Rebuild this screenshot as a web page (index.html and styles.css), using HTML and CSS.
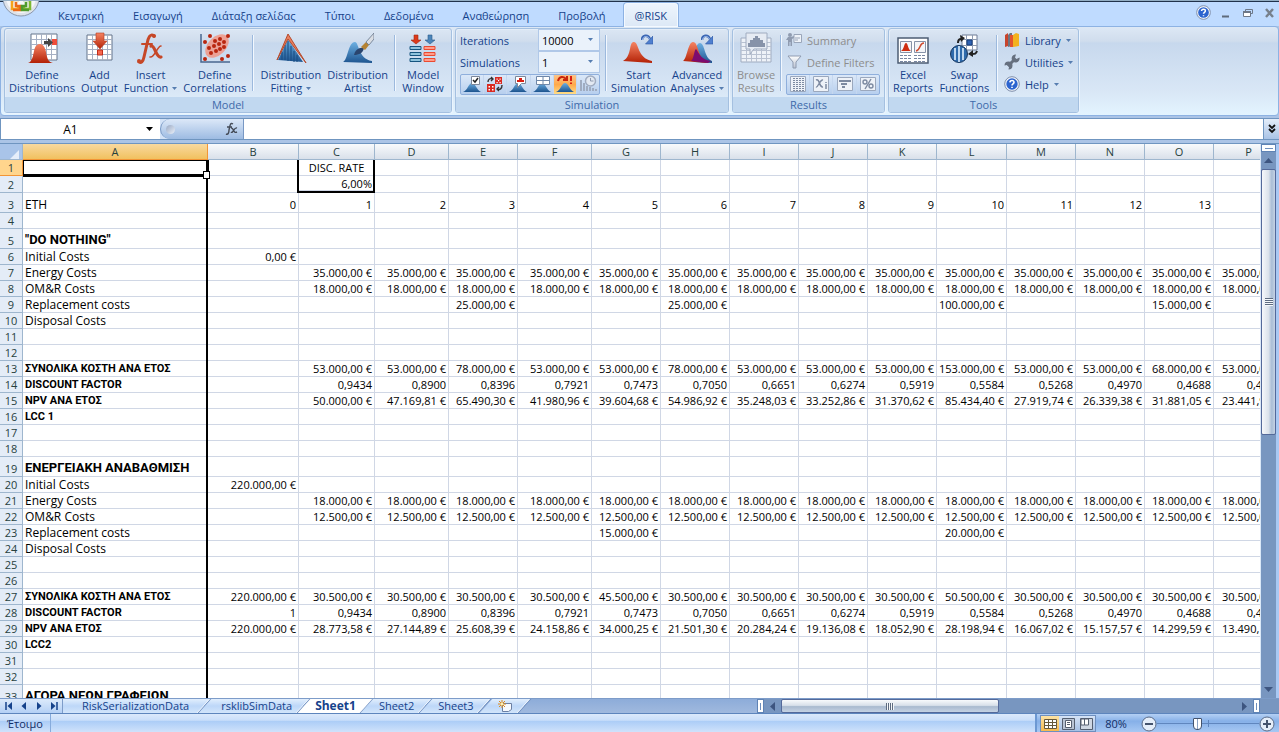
FILE: index.html
```html
<!DOCTYPE html>
<html lang="el">
<head>
<meta charset="utf-8">
<title>@RISK</title>
<link rel="stylesheet" href="styles.css">
</head>
<body>
<svg class="defs" aria-hidden="true">
  <defs>
    <linearGradient id="red" x1="0" y1="0" x2="0" y2="1"><stop offset="0" stop-color="#f58463"/><stop offset="1" stop-color="#b32106"/></linearGradient>
    <linearGradient id="blue" x1="0" y1="0" x2="0" y2="1"><stop offset="0" stop-color="#6db0e2"/><stop offset="1" stop-color="#1e5590"/></linearGradient>
    <linearGradient id="silver" x1="0" y1="0" x2="0" y2="1"><stop offset="0" stop-color="#ffffff"/><stop offset="1" stop-color="#b9c2d2"/></linearGradient>
    <symbol id="hill" viewBox="0 0 16 16"><path d="M0 15C4 14 5 7 8 7S12 13 16 15Z" fill="url(#blue)"/></symbol>
    <symbol id="help" viewBox="0 0 16 16"><circle cx="8" cy="8" r="7.3" fill="#f4f7fb" stroke="#7c8ca8"/><circle cx="8" cy="8" r="5.7" fill="#2c64cf"/><path d="M5.9 6.4C6 3.8 10.3 3.9 10 6.4C9.9 7.8 8 7.8 8 9.4M8 10.8V12" fill="none" stroke="#fff" stroke-width="1.6"/></symbol>
    <symbol id="down" viewBox="0 0 5 3"><path d="M0 0H5L2.5 3Z" fill="currentColor"/></symbol>
    <symbol id="again" viewBox="0 0 12 11"><path d="M1 6C1 1 7 0 9 5" fill="none" stroke="#3c67b5" stroke-width="2.4"/><path d="M1.500 6C2 2 6.500 1 8.500 5" fill="none" stroke="#b9d2f5" stroke-width=".8"/><path d="M12 2V10H4.500Z" fill="#4f7fd0" stroke="#2c559f" stroke-width=".6"/></symbol>
  </defs>
</svg>

<header class="tabbar">
  <button class="orb" aria-label="Office">
    <svg viewBox="0 0 36 16"><ellipse cx="18" cy="-3" rx="18" ry="18" fill="#dfe3ea" stroke="#8a97ab"/><ellipse cx="18" cy="-4" rx="15" ry="16" fill="#f5f6f8"/><g fill="none" stroke-width="2.6"><path d="M16 -1H9V8H15V4" stroke="#f5a31b"/><path d="M20 -1H27V8H21V4" stroke="#7db832"/><path d="M13 1V5H17V9H10" stroke="#ea6a1a"/><path d="M23 1V5H19V9H26" stroke="#4f9a2c"/></g></svg>
  </button>
  <nav class="tabs">
    <button>Κεντρική</button><button>Εισαγωγή</button><button>Διάταξη σελίδας</button><button>Τύποι</button><button>Δεδομένα</button><button>Αναθεώρηση</button><button>Προβολή</button><button class="on">@RISK</button>
  </nav>
  <div class="winctl">
    <button aria-label="Help"><svg width="15" height="15"><use href="#help"/></svg></button>
    <button aria-label="Minimize"><svg width="10" height="10"><path d="M1 8.500H8" stroke="#5f6b7b" stroke-width="2"/></svg></button>
    <button aria-label="Restore"><svg width="10" height="10"><path d="M2.500 3V1.500H9.500V5.500H8" fill="none" stroke="#6d7889"/><path d="M.5 3.500H7.500V8.500H.5Z" fill="#fff" stroke="#6d7889"/><path d="M0 4H8" stroke="#6d7889" stroke-width="2"/></svg></button>
    <button aria-label="Close"><svg width="10" height="10"><path d="M1 1L8 9M8 1L1 9" stroke="#77808c" stroke-width="2.400"/></svg></button>
  </div>
</header>

<section class="ribbon">
  <div class="group">
    <div class="items model">
      <button class="big"><svg viewBox="0 0 32 32"><path d="M5 2H31V28H5Z" fill="#fff" stroke="#64748b"/><path d="M5 7.500H31M5 12.500H31M5 17.500H31M5 22.500H31M10.500 2V28M15.500 2V28M20.500 2V28M25.500 2V28" stroke="#a5b0c4"/><path d="M26 7h5v6h-5Z" fill="#ee4d3b"/><path d="M18 9h4V6l5 4.500L22 15v-3h-4Z" fill="#444"/><path d="M2 31C6 30 7 24 8 19C9 14 11 12 14 12S19 15 20 20C21 26 22 30 27 31Z" fill="url(#red)"/></svg><span>Define<br>Distributions</span></button>
      <button class="big"><svg viewBox="0 0 32 32"><path d="M4 3H29V28H4Z" fill="#fff" stroke="#64748b"/><path d="M4 7.500H29M4 12.500H29M4 17.500H29M4 22.500H29M9.500 3V28M14.500 3V28M19.500 3V28M24.500 3V28" stroke="#a5b0c4"/><path d="M14.500 18h5v5h-5Z" fill="#f7674f" stroke="#c22e18"/><path d="M13 1h8v8h3L17 17L10 9h3Z" fill="url(#red)" stroke="#b53a20" stroke-width=".6"/></svg><span>Add<br>Output</span></button>
      <button class="big"><svg viewBox="0 0 32 32"><g fill="none" stroke="#c64727" stroke-linecap="round"><path d="M19 4C15 1 13 6 12 12L9 25C8 30 6 31 4 30" stroke-width="3"/><path d="M7 12H17" stroke-width="2"/><path d="M16 14C20 13 21 26 26 25" stroke-width="3.200"/><path d="M26 14C22 14 20 26 15 25" stroke-width="1.600"/></g><circle cx="19" cy="4" r="2" fill="#c64727"/><circle cx="4" cy="29" r="2" fill="#c64727"/></svg><span>Insert<br>Function <svg class="caret"><use href="#down"/></svg></span></button>
      <button class="big"><svg viewBox="0 0 32 32"><path d="M2 2V30H31" fill="none" stroke="#49678f" stroke-width="1.500"/><ellipse cx="18" cy="14" rx="14" ry="9" fill="#f68d78" opacity=".75" transform="rotate(-45 18 14)"/><g fill="#b9260f"><circle cx="11" cy="4" r="2"/><circle cx="29" cy="4" r="2"/><circle cx="6" cy="10" r="2"/><circle cx="16" cy="9" r="2"/><circle cx="21" cy="7" r="2"/><circle cx="25" cy="10" r="2"/><circle cx="10" cy="16" r="2"/><circle cx="15" cy="14" r="2"/><circle cx="20" cy="12" r="2"/><circle cx="25" cy="15" r="2"/><circle cx="12" cy="21" r="2"/><circle cx="17" cy="19" r="2"/><circle cx="21" cy="17" r="2"/><circle cx="6" cy="27" r="2"/><circle cx="23" cy="27" r="2"/><circle cx="29" cy="24" r="2"/></g></svg><span>Define<br>Correlations</span></button>
      <i class="sep"></i>
      <button class="big"><svg viewBox="0 0 32 32"><path d="M3 28L13 7L28 30Z" fill="url(#blue)"/><path d="M7 20V28M10 13V28M13 9V29M16 14V29M19 19V30M22 23V30" stroke="#174a80"/><path d="M2 28L13 2L31 31L13 7Z" fill="#e8805f" stroke="#b64a2c"/></svg><span>Distribution<br>Fitting <svg class="caret"><use href="#down"/></svg></span></button>
      <button class="big"><svg viewBox="0 0 32 32"><path d="M1 30C6 28 6 10 13 10C17 10 16 27 30 29V31Z" fill="url(#blue)"/><path d="M12 23C13 18 17 15 22 16C21 21 17 23 12 23Z" fill="#2a456e"/><path d="M19 15L24 10L27 13L23 18Z" fill="#b58334"/><path d="M24 10L32 1V7L27 13Z" fill="#d9dde3" stroke="#65758a" stroke-width=".8"/></svg><span>Distribution<br>Artist</span></button>
      <i class="sep"></i>
      <button class="big"><svg viewBox="0 0 32 32"><path d="M7 3h4v5h3L9 12L4 8h3Z" fill="#db3a1c" stroke="#a4290f" stroke-width=".6"/><path d="M21 3h4v5h3L23 12L18 8h3Z" fill="#4b85ba" stroke="#2e5c8c" stroke-width=".6"/><g fill="#8fc3dd" stroke="#16547f"><path d="M3 14.500h11v3H3ZM3 20.500h11v3H3ZM3 26.500h11v3H3Z"/></g><g fill="#ff9c8b" stroke="#ea4a31"><path d="M17 14.500h11v3H17ZM17 20.500h11v3H17ZM17 26.500h11v3H17Z"/></g></svg><span>Model<br>Window</span></button>
    </div>
    <h2>Model</h2>
  </div>

  <div class="group">
    <div class="items">
      <div class="settings">
        <label for="iter">Iterations</label><span class="combo"><select id="iter"><option>10000</option></select><svg class="caret"><use href="#down"/></svg></span>
        <label for="sims">Simulations</label><span class="combo"><select id="sims"><option>1</option></select><svg class="caret"><use href="#down"/></svg></span>
        <div class="strip">
          <button aria-label="Settings"><svg viewBox="0 0 18 18"><use href="#hill" width="18" height="18"/><path d="M8.500 1.500h8v8h-8Z" fill="#fff" stroke="#7c8799"/><path d="M10 5l2 2l3-4" fill="none" stroke="#222" stroke-width="1.500"/></svg></button>
          <button aria-label="Random values"><svg viewBox="0 0 18 18"><path d="M9 2h7v7H9ZM1 9h8v8H1Z" fill="#d92a22"/><g fill="#fff"><path d="M10.500 3.500h1.200v1.200h-1.200ZM13.500 3.500h1.200v1.200h-1.200ZM12 5h1.200v1.200H12ZM10.500 7h1.200v1.200h-1.200ZM13.500 7h1.200v1.200h-1.200ZM2.500 11h1.500v1.500H2.500ZM6 11h1.500v1.500H6ZM2.500 14h1.500v1.500H2.500ZM6 14h1.500v1.500H6Z"/></g><path d="M2 7C2 4 4 3 7 4M5 2l2 2l-2 2M16 10C16 14 14 15 11 14M13 12l-2 2l2 2" fill="none" stroke="#333" stroke-width="1.400"/></svg></button>
          <button aria-label="Show graph"><svg viewBox="0 0 18 18"><use href="#hill" width="18" height="18"/><path d="M6.500 1.500h10v7h-4l-4 4v-4h-2Z" fill="#fff" stroke="#7c8799"/><path d="M8 7V5h2V3h3v2h2v2Z" fill="#d81e12"/></svg></button>
          <button aria-label="Show window"><svg viewBox="0 0 18 18"><use href="#hill" width="18" height="18"/><path d="M3.500 1.500h13v8h-13ZM3.500 5.500h13M10 1.500v8" fill="#fff" stroke="#6f87a8"/></svg></button>
          <button class="lit" aria-label="Demo mode"><svg viewBox="0 0 18 18"><use href="#hill" width="18" height="18"/><path d="M2 6C3 1 8 1 10 4M11 1v4H7" fill="none" stroke="#c9260b" stroke-width="2"/><path d="M15 1V6M15 7.500V9" stroke="#d81e12" stroke-width="2"/></svg></button>
          <button disabled aria-label="Live update"><svg viewBox="0 0 18 18"><path d="M2 16V5M5 16V8M8 16V11M11 16V12M14 16V13M17 16V14" stroke="#a0acc0" stroke-width="2"/><circle cx="11.500" cy="6" r="5" fill="#e3e9f2" stroke="#a0acc0" stroke-width="1.500"/><path d="M11.500 3v3h3" fill="none" stroke="#8f9bb0"/></svg></button>
        </div>
      </div>
      <i class="sep"></i>
      <button class="big"><svg viewBox="0 0 32 32"><path d="M1 29C5 27 7 22 8 17C9 11 10 10 12 10C17 10 15 26 30 29V31Z" fill="url(#red)"/><use href="#again" x="19" y="2" width="12" height="11"/></svg><span>Start<br>Simulation</span></button>
      <button class="big"><svg viewBox="0 0 32 32"><path d="M12 28C15 24 14 11 19 11C24 11 23 26 31 29V31L13 30Z" fill="url(#blue)"/><path d="M2 29C6 27 7 10 12 10C18 10 16 27 27 31Z" fill="url(#red)"/><path d="M10 29C13 27 13 18 15 17C18 21 20 28 30 29L27 31Z" fill="#7d0b6f"/><use href="#again" x="20" y="2" width="12" height="11"/></svg><span>Advanced<br>Analyses <svg class="caret"><use href="#down"/></svg></span></button>
    </div>
    <h2>Simulation</h2>
  </div>

  <div class="group">
    <div class="items">
      <button class="big" disabled><svg viewBox="0 0 32 32"><path d="M1 6H31V30H1Z" fill="#eef2f8" stroke="#a0acc0"/><path d="M1 10.500H31M1 14.500H31M1 18.500H31M1 22.500H31M1 26.500H31M6.500 6V30M11.500 6V30M16.500 6V30M21.500 6V30M26.500 6V30" stroke="#b9c2d2"/><path d="M6 1H27V17H14L10 22V17H6Z" fill="#e6ebf3" stroke="#a0acc0"/><path d="M8 15V11h2V8h3V6h2V4h3v2h2v2h3v3h2v4Z" fill="#8793a9"/></svg><span>Browse<br>Results</span></button>
      <i class="sep"></i>
      <div class="settings results">
        <button class="row" disabled><svg viewBox="0 0 16 16"><circle cx="4" cy="3" r="2" fill="#8f9bb0"/><path d="M2 5H5L8 4V6L6 7V14H4.500V10H3.500V14H2V8H0Z" fill="#8f9bb0"/><path d="M8 2.500h7.500v8H8Z" fill="#eef2f8" stroke="#9aa6ba"/><path d="M9 6H14M9 8H12" stroke="#9aa6ba"/></svg>Summary</button>
        <button class="row" disabled><svg viewBox="0 0 16 16"><path d="M2 2H15L10 8V14H7V8Z" fill="url(#silver)" stroke="#8f9bb0"/></svg>Define Filters</button>
        <div class="strip">
          <button disabled aria-label="Data"><svg viewBox="0 0 18 18"><path d="M1.500 1.500h15v15h-15Z" fill="#eef2f8" stroke="#9ba8bd"/><path d="M5 3V16M8 3V16M11 3V16M14 3V16" stroke="#7d8aa1" stroke-width="2" stroke-dasharray="1 1"/></svg></button>
          <button disabled aria-label="Statistics"><svg viewBox="0 0 18 18"><path d="M1.500 1.500h15v15h-15Z" fill="#eef2f8" stroke="#9ba8bd"/><path d="M4 5C8 3 7 13 11 12M11 5C8 4 6 13 4 12M14 9v5M14 7v1" fill="none" stroke="#7d8aa1" stroke-width="1.500"/></svg></button>
          <button disabled aria-label="Sensitivity"><svg viewBox="0 0 18 18"><path d="M1.500 2.500h15v13h-15Z" fill="#eef2f8" stroke="#9ba8bd"/><path d="M3 6H15M5 9H11M6 12H9" stroke="#7d8aa1" stroke-width="2"/></svg></button>
          <button disabled aria-label="Scenarios"><svg viewBox="0 0 18 18"><path d="M1.500 2.500h15v13h-15Z" fill="#eef2f8" stroke="#9ba8bd"/><circle cx="6" cy="7" r="2" fill="none" stroke="#7d8aa1" stroke-width="1.400"/><circle cx="12" cy="11" r="2" fill="none" stroke="#7d8aa1" stroke-width="1.400"/><path d="M12 4L6 14" stroke="#7d8aa1" stroke-width="1.400"/></svg></button>
        </div>
      </div>
    </div>
    <h2>Results</h2>
  </div>

  <div class="group">
    <div class="items">
      <button class="big"><svg viewBox="0 0 32 32"><path d="M1 6H31V31H1Z" fill="#fff" stroke="#4c5c73" stroke-width="1.500"/><path d="M3.500 9.500h11v11h-11ZM17.500 9.500h11v11h-11Z" fill="#f4f5f8" stroke="#8793a8"/><path d="M4 19C7 18 7 11 9 11S11 18 14 19Z" fill="#cf2d10"/><path d="M19 19C24 18 22 11 27 11" fill="none" stroke="#cf4c30" stroke-width="1.500"/><path d="M3 23.500H15M3 26.500H15M3 29.500H15M17 23.500H29M17 26.500H29M17 29.500H29" stroke="#7785a0" stroke-dasharray="3 1"/></svg><span>Excel<br>Reports</span></button>
      <button class="big"><svg viewBox="0 0 32 32"><path d="M14 3H29V18H14Z" fill="#fff" stroke="#6c7b94"/><path d="M14 7.500H29M14 13.500H29M18.500 3V18M24.500 3V18" stroke="#8e9bb1"/><path d="M19 8h5v5h-5Z" fill="#2e62b3" stroke="#173c78"/><circle cx="11" cy="22" r="8.500" fill="#2e6aab" stroke="#16365f"/><path d="M7 16V28M11 14V30M15 16V28" stroke="#bcd6ef" stroke-width="2"/><path d="M10 11C10 8 11 7 13 7" fill="none" stroke="#222" stroke-width="2"/><path d="M12 3L17 6L13 10Z" fill="#222"/><path d="M29 19C28 22 27 22 24 22" fill="none" stroke="#222" stroke-width="2"/><path d="M25 18L20 22L25 25Z" fill="#222"/></svg><span>Swap<br>Functions</span></button>
      <i class="sep"></i>
      <div class="settings tools">
        <button class="row"><svg viewBox="0 0 16 16"><path d="M1 3l3-2v13l-3 1Z" fill="#c8442c"/><path d="M4 3l2-2h2v13l-4 1Z" fill="#6c7480"/><path d="M6 3h3v12H6Z" fill="#e2552f"/><path d="M9 3l3-2 3 1v12l-6 1Z" fill="#f3b21f"/></svg>Library <svg class="caret"><use href="#down"/></svg></button>
        <button class="row"><svg viewBox="0 0 16 16"><path d="M4 12L11 5" stroke="#66707f" stroke-width="3"/><path d="M15.500 3.500L12.500 5L11 3.500L12 .5A4 4 0 1 0 15.500 3.500ZM.5 11.500L3 11L5 13L4.500 15.500A4 4 0 1 0 .5 11.500Z" fill="#66707f"/></svg>Utilities <svg class="caret"><use href="#down"/></svg></button>
        <button class="row"><svg><use href="#help"/></svg>Help <svg class="caret"><use href="#down"/></svg></button>
      </div>
    </div>
    <h2>Tools</h2>
  </div>
</section>

<section class="formula">
  <div class="namebox"><input aria-label="Name box" value="A1"><button aria-label="Names"><svg width="7" height="4"><path d="M0 0H7L3.500 4Z"/></svg></button></div>
  <div class="fx"><i></i><button aria-label="Insert function"><svg width="13" height="14" viewBox="0 0 13 14"><path d="M8 2C5 0 5 4 4 8C4 11 3 13 1 12M2 5H7M6 6C9 5 8 12 12 10M12 6C9 5 8 12 6 10" fill="none" stroke="#444b57" stroke-width="1.400"/></svg></button></div>
  <input class="entry" aria-label="Formula">
  <button class="expand" aria-label="Expand"><svg width="8" height="10"><path d="M1 1L4 4L7 1M1 5L4 8L7 5" fill="none" stroke="#111" stroke-width="1.800"/></svg></button>
</section>

<main class="book">
  <div class="view"><table class="grid"><colgroup><col class="c-head"><col class="c-a"><col class="c-b"><col class="c-c"><col class="c-d"><col><col class="c-f"><col><col><col><col><col><col class="c-l"><col><col><col><col class="c-l"></colgroup><thead></thead><tbody></tbody></table></div>
  <div class="vscroll">
    <i class="split"></i>
    <button aria-label="Up"><svg width="9" height="5"><path d="M0 5H9L4.500 0Z" fill="#3d5580"/></svg></button>
    <div class="vtrack"><i class="vthumb"><b></b></i></div>
    <button aria-label="Down"><svg width="9" height="5"><path d="M0 0H9L4.500 5Z" fill="#3d5580"/></svg></button>
  </div>
</main>

<section class="sheets">
  <div class="nav">
    <button aria-label="First"><svg width="8" height="8"><path d="M1 0V8" stroke="#15428b" stroke-width="1.500"/><path d="M7 0V8L2.500 4Z" fill="#15428b"/></svg></button>
    <button aria-label="Previous"><svg width="8" height="8"><path d="M6 0V8L1.500 4Z" fill="#15428b"/></svg></button>
    <button aria-label="Next"><svg width="8" height="8"><path d="M2 0V8L6.500 4Z" fill="#15428b"/></svg></button>
    <button aria-label="Last"><svg width="8" height="8"><path d="M7 0V8" stroke="#15428b" stroke-width="1.500"/><path d="M1 0V8L5.500 4Z" fill="#15428b"/></svg></button>
  </div>
  <div class="sheettabs">
    <button class="wide"><span>RiskSerializationData</span></button><button class="roomy"><span>rsklibSimData</span></button><button class="on"><span>Sheet1</span></button><button><span>Sheet2</span></button><button><span>Sheet3</span></button><button aria-label="New sheet"><span><svg width="15" height="13"><path d="M4.500 3.500h9v6l-3 2h-6Z" fill="#f5f8fd" stroke="#6b7fa3"/><path d="M4 0V8M0 4H8M1 1L7 7M7 1L1 7" stroke="#dd8a1c"/><circle cx="4" cy="4" r="1.300" fill="#fff3b0"/></svg></span></button>
  </div>
  <div class="hscroll">
    <i class="split"></i>
    <button aria-label="Left"><svg width="5" height="9"><path d="M5 0V9L0 4.500Z" fill="#3d5580"/></svg></button>
    <div class="htrack"><i class="hthumb"><b></b></i></div>
    <button aria-label="Right"><svg width="5" height="9"><path d="M0 0V9L5 4.500Z" fill="#3d5580"/></svg></button>
    <i class="split"></i>
  </div>
</section>

<footer class="status">
  <span class="ready">Έτοιμο</span>
  <div class="tray">
    <div class="views">
      <button class="lit" aria-label="Normal"><svg width="13" height="10"><path d="M.5 .5h12v9H.5ZM.5 3.500h12M.5 6.500h12M4.500 .5v9M8.500 .5v9" fill="#fff" stroke="#66583a"/></svg></button>
      <button aria-label="Page layout"><svg width="13" height="12"><path d="M.5 .5h12v11H.5Z" fill="#b9c4d4" stroke="#555f70"/><path d="M3.500 2.500h6v7h-6ZM5 4.500h3M5 6.500h3" fill="#fff" stroke="#555f70"/></svg></button>
      <button aria-label="Page break"><svg width="13" height="12"><path d="M.5 .5h12v11H.5Z" fill="#cfd7e3" stroke="#555f70"/><path d="M1 1h3.500v6H1ZM4.500 1h4v6h-4Z" fill="#fff" stroke="#555f70"/></svg></button>
    </div>
    <button class="pct">80%</button>
    <button class="zoom" aria-label="Zoom out"><svg width="16" height="16"><circle cx="8" cy="8" r="7" fill="#e4edf9" stroke="#5a6b88"/><path d="M4 8H12" stroke="#44536d" stroke-width="2"/></svg></button>
    <input type="range" min="0" max="100" value="39" aria-label="Zoom">
    <button class="zoom" aria-label="Zoom in"><svg width="16" height="16"><circle cx="8" cy="8" r="7" fill="#e4edf9" stroke="#5a6b88"/><path d="M4 8H12M8 4V12" stroke="#44536d" stroke-width="2"/></svg></button>
  </div>
</footer>
<script src="sheet.js"></script>
</body>
</html>
```
FILE: styles.css
```css
* { box-sizing: border-box; }
html, body { height: 100%; }
body {
  margin: 0;
  display: flex;
  flex-direction: column;
  overflow: hidden;
  background: #abc4e6;
  color: #15428b;
  font: 11px/13px "Open Sans", "Noto Sans", sans-serif;
}
button, input, select { font: inherit; color: inherit; margin: 0; padding: 0; border: 0; background: none; border-radius: 0; }
button { white-space: nowrap; }
svg { display: block; }
.defs { position: absolute; width: 0; height: 0; }

/* tab bar */
.tabbar {
  flex: none;
  display: flex;
  height: 26px;
  border-top: 1px solid #93aec4;
  box-shadow: inset 0 1px #20324b;
  background: #bfdbff;
}
.orb { position: relative; z-index: 1; width: 40px; padding-left: 3px; align-self: flex-start; }
.orb svg { width: 36px; height: 16px; }
.tabs { display: flex; flex: 1; gap: 1px; padding: 1px 0 0 4px; }
.tabs button { height: 24px; padding: 1px 13px 0; line-height: 19px; border: 1px solid transparent; border-bottom: 0; }
.tabs button.on { position: relative; padding: 1px 11px 0; margin-left: 2px; background: linear-gradient(#eef5fd, #dce8f6); border-color: #8db2e3; border-radius: 4px 4px 0 0; height: 25px; box-shadow: inset 0 0 0 1px #f3f9ff; }
.winctl { display: flex; align-items: center; gap: 12px; padding: 0 4px 2px 0; }
.winctl button:first-child { margin-right: -2px; }

/* ribbon */
.ribbon {
  flex: none;
  display: grid;
  grid-template-columns: 448px 274px 153px 191px;
  gap: 3px;
  padding: 1px 3px 2px;
  height: 90px;
  border: 1px solid #8db2e3;
  border-radius: 4px;
  background: linear-gradient(#dde8f5 0, #d0dded 14px, #c7d8ed 16px, #d9e7f6 65px, #e3f4ff 100%);
}
.group { display: flex; flex-direction: column; border: 1px solid #a4c0e0; border-radius: 3px; box-shadow: inset 1px 1px #e4edf8, 1px 1px #eaf4fe; overflow: hidden; }
.group h2 { margin: 0; height: 15px; font-weight: 400; font-size: 11px; line-height: 15px; text-align: center; background: #c1d8f0; color: #3e6aaa; }
.items { flex: 1; display: flex; justify-content: space-between; padding: 0 4px; }
.model { padding-right: 7px; }
.big { display: flex; flex-direction: column; align-items: center; gap: 4px; padding: 3px 0 0; text-align: center; }
.big > svg { width: 32px; height: 32px; }
.caret { display: inline-block; width: 5px; height: 3px; margin: 0 0 2px 1px; color: #567db0; }
.sep { width: 2px; margin: 6px 0; border-left: 1px solid #9cb9dd; border-right: 1px solid #f2f8ff; }
button:disabled { color: #8d8d8d; }
.settings { display: grid; grid-template: 22px 22px 22px / 78px 62px; align-content: start; align-items: center; }
.combo { position: relative; height: 22px; }
.combo select { appearance: none; width: 100%; height: 22px; padding: 0 3px; background: #eaf2fb; border: 1px solid #b0c8e8; color: #000; }
.combo .caret { position: absolute; right: 7px; top: 9px; margin: 0; }
.strip { grid-column: 1 / -1; display: flex; height: 21px; border: 1px solid #8fafdc; border-radius: 2px; background: linear-gradient(#dbe8f8, #b7cfee); }
.strip button { flex: 1; display: grid; place-items: center; border-left: 1px solid #c5d7ef; }
.strip button:first-child { border-left: 0; }
.strip svg { width: 18px; height: 18px; }
.strip .lit { background: linear-gradient(#fbc48b, #ffa94a 50%, #ffdd86); }
.row { display: flex; align-items: center; gap: 5px; }
.row > svg { width: 16px; height: 16px; }
.row .caret { width: 5px; height: 3px; margin: 0; }
.results { grid-template: 22px 22px 22px / 94px; }
.tools { grid-template: 22px 22px 22px / 70px; }

/* formula bar */
.formula { flex: none; display: flex; height: 22px; margin-top: 2px; background: #d4e3f7; border: 1px solid #6f95c0; border-width: 1px 0; }
.namebox { display: flex; align-items: center; width: 160px; background: #fff; border-left: 1px solid #6f95c0; color: #000; }
.namebox input { width: 139px; text-align: center; font-size: 12px; }
.namebox button { flex: 1; padding-left: 6px; }
.fx { display: flex; align-items: center; justify-content: space-between; width: 84px; padding: 0 5px; border: 1px solid #7898c4; border-width: 0 1px; border-radius: 10px 0 0 10px; background: linear-gradient(#dce8f8, #9dbbe2); }
.fx i { width: 9px; height: 9px; border-radius: 50%; background: linear-gradient(135deg, #99a9c4, #eaf0f9); }
.entry { flex: 1; background: #fff; }
.expand { display: grid; place-items: center; width: 16px; border-left: 1px solid #6f95c0; background: linear-gradient(#e4edf9, #a9c3e6); }

/* worksheet */
.book { flex: 1; min-height: 0; display: flex; margin-top: 3px; border-top: 1px solid #6f95c0; background: #b7d0f2; }
.view { flex: 1; min-width: 0; overflow: hidden; background: #fff; }
.grid { table-layout: fixed; width: 1284px; border-collapse: separate; border-spacing: 0; color: #000; }
.grid col { width: 69px; }
.grid .c-head { width: 23px; }
.grid .c-a { width: 185px; }
.grid .c-b { width: 91px; }
.grid .c-c { width: 76px; }
.grid .c-d, .grid .c-f { width: 74px; }
.grid .c-l { width: 70px; }
.grid th, .grid td { height: 16px; padding: 0 2px; border-right: 1px solid #d0d7e5; border-bottom: 1px solid #d0d7e5; line-height: 14px; white-space: nowrap; vertical-align: bottom; text-align: right; }
.grid thead th { padding: 0; font-weight: 400; color: #27413e; text-align: center; border-color: #9eb6ce; background: linear-gradient(#f8fafc, #d9e0ea); }
.grid tbody th { padding: 0; font-size: 11px; font-weight: 400; color: #27413e; text-align: center; border-color: #9eb6ce; background: #e4ecf7; }
.grid thead th.picked { background: linear-gradient(#f9d99f, #f1c15f); border-color: #f29536; }
.grid tbody th.picked { background: #ffd58d; border-color: #f29536; }
.grid thead .corner { background: #a9c4e9; padding: 4px 3px 0 10px; }
.grid .h17 > * { height: 17px; }
.grid .h20 > * { height: 20px; }
.grid .name { text-align: left; font-size: 12px; }
.grid .name.strong { font: 700 11px/14px Roboto, sans-serif; }
.grid .name.title { font: 700 13px/17px Roboto, sans-serif; }
.grid .name, .grid .edge {
  border: 0;
  background: linear-gradient(#000, #000) right / 2px 100% no-repeat, linear-gradient(#d0d7e5, #d0d7e5) bottom / 100% 1px no-repeat;
}
.grid .name { padding-bottom: 1px; }
.grid .edge { padding: 0 3px 1px 2px; }
.grid .foot { border-bottom: 2px solid #000; padding-bottom: 0; }
.grid .mid { text-align: center; }
.grid .cursor { position: relative; overflow: visible; }
.ring { position: absolute; inset: 0 -1px -1px 0; border: 1px solid #000; border-bottom-width: 3px; }
.ring::after { content: ""; position: absolute; right: -2px; bottom: -5px; width: 5px; height: 6px; border: 1px solid #000; background: #fff; }

/* scroll bars */
.vscroll { display: flex; flex-direction: column; width: 19px; border-right: 3px solid #a9c8f3; border-left: 1px solid #dbe8f8; background: #7896c0; }
.vscroll button { display: grid; place-items: center; height: 17px; }
.vscroll .split { height: 8px; border: 1px solid #5f83b5; background: linear-gradient(#6f8fbd, #6f8fbd) center / 8px 1px no-repeat #fff; }
.vtrack { flex: 1; }
.vthumb { display: grid; place-items: center; height: 52%; border: 1px solid #54699a; border-radius: 2px; background: linear-gradient(90deg, #f6f8fb, #dbe2eb 50%, #a9bdd6 75%, #c6d3e4); }
.vthumb b { width: 8px; height: 8px; background: repeating-linear-gradient(#5d6b80 0 1px, #f4f7fa 1px 2px); }

/* sheet tabs */
.sheets { flex: none; display: flex; height: 16px; border-top: 1px solid #7d9cc9; border-bottom: 1px solid #5d85bd; background: linear-gradient(#8dacd9, #a0b9de); }
.nav { position: relative; z-index: 1; display: flex; align-items: center; gap: 7px; width: 63px; padding-left: 5px; background: linear-gradient(#dceafb, #b4d0f5); border-right: 1px solid #7d9cc9; }
.sheettabs { display: flex; font-size: 11px; line-height: 14px; }
.sheettabs button { position: relative; padding: 0 12px; }
.sheettabs button.wide { padding: 0 16px 0 19px; }
.sheettabs button.roomy { padding: 0 12px 0 16px; }
.sheettabs button::before { content: ""; position: absolute; inset: 0; transform: skewX(-42deg); border-right: 1px solid #6c8cbd; background: linear-gradient(#e1eefd, #bdd7f8 50%, #d2e5fb); box-shadow: inset -1px 0 #fff; }
.sheettabs button.wide::before { left: -8px; }
.sheettabs button.on::before { background: #fff; }
.sheettabs button.on { padding: 0 11px; font-size: 12px; font-weight: 700; }
.sheettabs span { position: relative; }
.hscroll { display: flex; width: 522px; margin-left: auto; padding-right: 19px; background: #7896c0; }
.hscroll button { display: grid; place-items: center; width: 17px; }
.hscroll .split { width: 7px; border: 1px solid #5f83b5; background: linear-gradient(#6f8fbd, #6f8fbd) center / 1px 7px no-repeat #fff; }
.htrack { flex: 1; }
.hthumb { display: grid; place-items: center; width: 48%; height: 14px; border: 1px solid #54699a; border-radius: 2px; background: linear-gradient(#f8fafc, #d8e0ea 45%, #a9bacf 55%, #c6d3e4); }
.hthumb b { width: 8px; height: 7px; background: repeating-linear-gradient(90deg, #5d6b80 0 1px, #f4f7fa 1px 2px); }

/* status bar */
.status { flex: none; display: flex; justify-content: space-between; height: 18px; color: #102d66; background: linear-gradient(#dbe9fb, #c9defa 35%, #accdf7 40%, #cfe2fb); }
.ready { width: 51px; padding-left: 7px; line-height: 20px; border-right: 1px solid #86abdc; }
.tray { display: flex; align-items: center; width: 244px; padding: 1px 4px 0 3px; border-left: 2px solid #6c98d2; background: linear-gradient(#b4d0f4, #86b0e8 40%, #a7c8f3); }
.views { display: flex; height: 17px; border: 1px solid #6e8fbf; background: linear-gradient(#d5e3f6, #a5c0e5); }
.views button { display: grid; place-items: center; width: 18px; }
.views .lit { background: linear-gradient(#fde3a5, #f6b94e); }
.pct { width: 40px; margin-right: 5px; }
.zoom { flex: none; width: 16px; }
.status input { flex: 1; min-width: 0; height: 16px; appearance: none; background: linear-gradient(#5f86be, #5f86be) center / 100% 1px no-repeat, linear-gradient(#5f86be, #5f86be) center / 1px 7px no-repeat; }
.status input::-webkit-slider-thumb { appearance: none; width: 9px; height: 12px; border: 1px solid #44536d; border-radius: 1px 1px 4px 4px; background: linear-gradient(90deg, #fff 3px, #8da3c4 3px, #8da3c4 4px, #fff 4px); }
```
FILE: sheet.js
```javascript
const letters = "ABCDEFGHIJKLMNOP".split("");
const euro = v => v + " €";
const fill = (v, over = {}) => letters.slice(2).map(l => euro(over[l] || v));
const only = over => letters.slice(1).map(l => over[l] ? euro(over[l]) : "");
const factors = "0,9434 0,8900 0,8396 0,7921 0,7473 0,7050 0,6651 0,6274 0,5919 0,5584 0,5268 0,4970 0,4688 0,4423".split(" ");
const npv1 = "50.000,00 47.169,81 65.490,30 41.980,96 39.604,68 54.986,92 35.248,03 33.252,86 31.370,62 85.434,40 27.919,74 26.339,38 31.881,05 23.441,95".split(" ").map(euro);
const npv2 = "28.773,58 27.144,89 25.608,39 24.158,86 34.000,25 21.501,30 20.284,24 19.136,08 18.052,90 28.198,94 16.067,02 15.157,57 14.299,59 13.490,18".split(" ").map(euro);

const rows = {
  1: ["", "", "", "DISC. RATE"],
  2: ["", "", "", "6,00%"],
  3: ["", "ETH", ...Array.from({ length: 14 }, (_, i) => i)],
  5: ["title", "\"DO NOTHING\""],
  6: ["", "Initial Costs", euro("0,00")],
  7: ["", "Energy Costs", "", ...fill("35.000,00")],
  8: ["", "OM&R Costs", "", ...fill("18.000,00")],
  9: ["", "Replacement costs", ...only({ E: "25.000,00", H: "25.000,00", L: "100.000,00", O: "15.000,00" })],
  10: ["", "Disposal Costs"],
  13: ["strong", "ΣΥΝΟΛΙΚΑ ΚΟΣΤΗ ΑΝΑ ΕΤΟΣ", "", ...fill("53.000,00", { E: "78.000,00", H: "78.000,00", L: "153.000,00", O: "68.000,00" })],
  14: ["strong", "DISCOUNT FACTOR", "", ...factors],
  15: ["strong", "NPV ΑΝΑ ΕΤΟΣ", "", ...npv1],
  16: ["strong", "LCC 1"],
  19: ["title", "ΕΝΕΡΓΕΙΑΚΗ ΑΝΑΒΑΘΜΙΣΗ"],
  20: ["", "Initial Costs", euro("220.000,00")],
  21: ["", "Energy Costs", "", ...fill("18.000,00")],
  22: ["", "OM&R Costs", "", ...fill("12.500,00")],
  23: ["", "Replacement costs", ...only({ G: "15.000,00", L: "20.000,00" })],
  24: ["", "Disposal Costs"],
  27: ["strong", "ΣΥΝΟΛΙΚΑ ΚΟΣΤΗ ΑΝΑ ΕΤΟΣ", euro("220.000,00"), ...fill("30.500,00", { G: "45.500,00", L: "50.500,00" })],
  28: ["strong", "DISCOUNT FACTOR", "1", ...factors],
  29: ["strong", "NPV ΑΝΑ ΕΤΟΣ", euro("220.000,00"), ...npv2],
  30: ["strong", "LCC2"],
  33: ["title", "ΑΓΟΡΑ ΝΕΩΝ ΓΡΑΦΕΙΩΝ"]
};
const heights = { 2: "h17", 3: "h20", 5: "h20", 19: "h20", 33: "h20" };

const head = document.querySelector(".grid thead").insertRow();
head.innerHTML = '<th class="corner"><svg width="9" height="9"><path d="M9 0V9H0Z" fill="#e6eefa"/></svg></th>' +
  letters.map(l => `<th${l === "A" ? ' class="picked"' : ""}>${l}</th>`).join("");

const body = document.querySelector(".grid tbody");
for (let n = 1; n <= 33; n++) {
  const [kind = "", ...cells] = rows[n] || [];
  const tr = body.insertRow();
  tr.className = heights[n] || "";
  const th = document.createElement("th");
  th.textContent = n;
  if (n === 1) th.className = "picked";
  tr.append(th);
  letters.forEach((l, i) => {
    const td = tr.insertCell();
    td.textContent = cells[i] ?? "";
    if (l === "A") td.className = "name " + kind;
    if (n < 3 && (l === "B" || l === "C")) td.classList.add("edge");
    if (n === 2 && l === "C") td.classList.add("foot");
    if (n === 1 && l === "C") td.classList.add("mid");
    if (n === 1 && l === "A") {
      td.classList.add("cursor");
      td.innerHTML = '<i class="ring"></i>';
    }
  });
}
```
